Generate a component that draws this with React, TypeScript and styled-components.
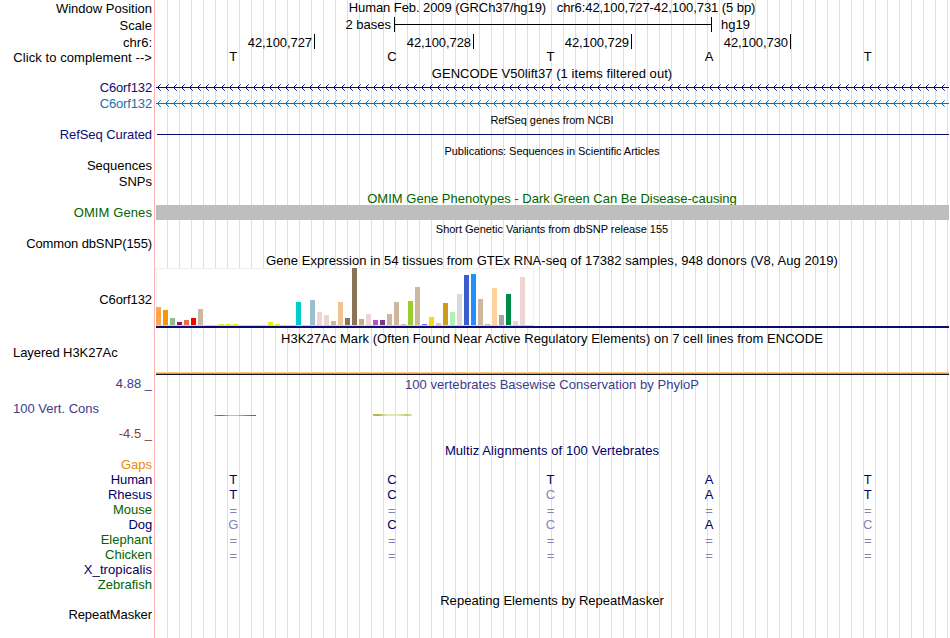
import React from 'react';
import styled, { createGlobalStyle } from 'styled-components';

const GlobalStyle = createGlobalStyle`
    body {
        margin: 0;
        background: #fff;
        overflow: hidden;
    }
`;

const NAVY = '#0c0c78';
const DARK_NAVY = '#000064';
const GREEN = '#006400';

const Browser = styled.div`
    display: flex;
    width: 949px;
    height: 638px;
    background: #fff;
    font-family: "Liberation Sans", Arial, Helvetica, sans-serif;
    font-size: 13px;
    line-height: 15px;
    color: #000;
    white-space: pre;
`;

const LabelColumn = styled.div`
    width: 154px;
    flex: none;
    display: flex;
    flex-direction: column;
`;

const Label = styled.div<{ $gap?: number; $color?: string; $left?: boolean; $spacing?: number }>`
    flex: none;
    height: 15px;
    margin-top: ${({ $gap }) => $gap ?? 0}px;
    padding: 0 2px 0 13px;
    text-align: ${({ $left }) => ($left ? 'left' : 'right')};
    letter-spacing: ${({ $spacing }) => $spacing ?? 0}px;
    color: ${({ $color }) => $color ?? '#000'};
`;

const TrackColumn = styled.div`
    flex: 1;
    min-width: 0;
    display: flex;
    flex-direction: column;
    border-left: 1px solid #ffb4b4;
    background: repeating-linear-gradient(to right, #dcdcf8 0 1px, transparent 1px 12px) 12px 0 no-repeat;
`;

const Title = styled.div<{ $gap?: number; $color?: string; $small?: boolean; $height?: number; $spacing?: number }>`
    flex: none;
    height: ${({ $height }) => $height ?? 15}px;
    margin-top: ${({ $gap }) => $gap ?? 0}px;
    overflow: hidden;
    text-align: center;
    font-size: ${({ $small }) => ($small ? 11 : 13)}px;
    letter-spacing: ${({ $spacing }) => $spacing ?? 0}px;
    color: ${({ $color }) => $color ?? '#000'};
`;

const ScaleRow = styled.div`
    flex: none;
    display: flex;
    height: 15px;
    margin-top: 2px;
`;

const ScaleText = styled.span`
    width: 236px;
    box-sizing: border-box;
    margin-right: 3px;
    text-align: right;
`;

const ScaleBar = styled.div`
    width: 316px;
    height: 15px;
    margin-right: 9px;
    border: solid #000;
    border-width: 0 1px;
    background: linear-gradient(#000, #000) 0 7px / 100% 1px no-repeat;
`;

const PositionRow = styled.div`
    flex: none;
    display: grid;
    grid-template-columns: 159px 159px 158px 159px;
    height: 15px;
    margin-top: 2px;
    padding-left: 1px;
`;

const Position = styled.span`
    padding: 1px 2px 0 0;
    height: 14px;
    border-right: 1px solid #000;
    text-align: right;
    letter-spacing: -0.08px;
`;

const BaseRow = styled.div<{ $gap?: number; $color?: string }>`
    flex: none;
    display: grid;
    grid-template-columns: repeat(5, 158.6px);
    height: 15px;
    margin: ${({ $gap }) => $gap ?? 0}px 0 0 -1px;
    text-align: center;
    color: ${({ $color }) => $color ?? '#000'};
`;

const Base = styled.span<{ $faded?: boolean; $unaligned?: boolean }>`
    padding-top: ${({ $unaligned }) => ($unaligned ? 1 : 0)}px;
    color: ${({ $faded }) => ($faded ? '#8484b4' : 'inherit')};
`;

const Gene = styled.svg<{ $gap: number }>`
    flex: none;
    display: block;
    width: 794px;
    height: 7px;
    margin-top: ${({ $gap }) => $gap}px;
`;

const Band = styled.div<{ $gap: number; $height: number; $color: string; $inset?: number }>`
    flex: none;
    height: ${({ $height }) => $height}px;
    margin: ${({ $gap, $inset }) => `${$gap}px 0 0 ${$inset ?? 1}px`};
    background: ${({ $color }) => $color};
`;

const Expression = styled.div`
    flex: none;
    display: flex;
    align-items: flex-end;
    gap: 2px;
    box-sizing: border-box;
    width: 378px;
    height: 58px;
    margin: -2px 0 0 1px;
    background:
        linear-gradient(#d3d3d3, #d3d3d3) 0 100% / 100% 1px no-repeat,
        linear-gradient(#f0f0f0, #f0f0f0) 0 0 / 100% 1px no-repeat,
        linear-gradient(#f0f0f0, #f0f0f0) 0 0 / 1px 100% no-repeat,
        linear-gradient(#f0f0f0, #f0f0f0) 100% 0 / 1px 100% no-repeat,
        #fff;
    padding-bottom: 1px;
`;

const Tissue = styled.i<{ $color: string; $height: number }>`
    flex: none;
    width: 5px;
    height: ${({ $height }) => $height}px;
    background: ${({ $color }) => $color};
`;

const Conservation = styled.div`
    flex: none;
    display: flex;
    height: 2px;
    margin-top: 22px;
`;

const BlueScore = styled.div`
    width: 42px;
    height: 1px;
    margin: 1px 117px 0 59px;
    background: linear-gradient(to right, #9c9cff, #5050ff 15%, #b4b4ff 40%, #b4b4ff 55%, #6464ff 80%, #5050ff);
`;

const OliveScore = styled.div`
    width: 39px;
    height: 2px;
    background: linear-gradient(to right, #c0c040, #b4b43c 15%, #e6e6b4 35%, #e6e6b4 65%, #c8c864 88%, #e6e6b4);
`;

// [colour, height] for every GTEx tissue, in track order
const tissues: [string, number][] = [
    ['#ffa54f', 18], ['#ee9a00', 15], ['#8fbc8f', 7], ['#8b1c62', 3], ['#ee6a50', 5], ['#ff0000', 7], ['#cdb79e', 16],
    ['#eeee00', 0], ['#eeee00', 0], ['#eeee00', 1], ['#eeee00', 1], ['#eeee00', 1], ['#eeee00', 0], ['#eeee00', 0],
    ['#eeee00', 0], ['#eeee00', 0], ['#eeee00', 3], ['#eeee00', 1], ['#eeee00', 0], ['#eeee00', 0],
    ['#00cdcd', 23], ['#ee82ee', 0], ['#9ac0cd', 25], ['#eed5d2', 13], ['#eed5d2', 10], ['#cdb79e', 4], ['#eec591', 23],
    ['#8b7355', 7], ['#8b7355', 57], ['#cdaa7d', 6], ['#eed5d2', 11], ['#b452cd', 5], ['#7a378b', 5], ['#cdb79e', 11],
    ['#cdb79e', 23], ['#cdb79e', 1], ['#9acd32', 24], ['#cdb79e', 38], ['#7a67ee', 1], ['#ffd700', 8], ['#ffb6c1', 2],
    ['#cd9b1d', 22], ['#b4eeb4', 13], ['#d9d9d9', 31], ['#3a5fcd', 50], ['#1e90ff', 51], ['#cdb79e', 26], ['#cdb79e', 1],
    ['#ffd39b', 37], ['#a6a6a6', 10], ['#008b45', 31], ['#eed5d2', 4], ['#eed5d2', 48], ['#ff00ff', 0],
];

// lower case marks a base that differs from the human one
const alignments = ['TCTAT', 'TCcAT', '=====', 'gCcAc', '=====', '====='];

type GeneArrowsPropsType = {
    id: string,
    color: string,
    gap: number
}

function GeneArrows({ id, color, gap }: GeneArrowsPropsType) {
    return (
        <Gene $gap={gap} viewBox="0 0 794 7" shapeRendering="crispEdges">
            <defs>
                <pattern id={id} x="2" y="0" width="8" height="7" patternUnits="userSpaceOnUse">
                    <path d="M0 3h1v1h-1zM1 2h1v3h-1zM2 1h1v1h-1zM2 5h1v1h-1z" fill={color} />
                    <path d="M3 0h1v1h-1zM3 6h1v1h-1z" fill={color} fillOpacity="0.7" />
                </pattern>
            </defs>
            <rect x="2" width="792" height="7" fill={`url(#${id})`} />
            <rect x="1" y="3" width="793" height="1" fill={color} />
        </Gene>
    );
}

function Labels() {
    return (
        <LabelColumn>
            <Label $gap={1}>Window Position</Label>
            <Label $gap={2}>Scale</Label>
            <Label $gap={2}>chr6:</Label>
            <Label $spacing={0.08}>{'Click to complement -->'}</Label>
            <Label $gap={15} $color={NAVY} $spacing={-0.15}>C6orf132</Label>
            <Label $gap={1} $color="#1670b0" $spacing={-0.15}>C6orf132</Label>
            <Label $gap={16} $color={NAVY} $spacing={-0.07}>RefSeq Curated</Label>
            <Label $gap={16}>Sequences</Label>
            <Label $gap={1}>SNPs</Label>
            <Label $gap={16} $color={GREEN} $spacing={0.1}>OMIM Genes</Label>
            <Label $gap={16} $spacing={-0.12}>Common dbSNP(155)</Label>
            <Label $gap={41} $spacing={-0.1}>C6orf132</Label>
            <Label $gap={38} $left $spacing={-0.06}>Layered H3K27Ac</Label>
            <Label $gap={16} $color="#3c3c8c">4.88 _</Label>
            <Label $gap={10} $color="#3c3c8c" $left>100 Vert. Cons</Label>
            <Label $gap={10} $color="#8c3c3c">-4.5 _</Label>
            <Label $gap={16} $color="#e68a00">Gaps</Label>
            <Label $color={DARK_NAVY} $spacing={-0.15}>Human</Label>
            <Label $color={DARK_NAVY}>Rhesus</Label>
            <Label $color={GREEN}>Mouse</Label>
            <Label $color={DARK_NAVY} $spacing={-0.15}>Dog</Label>
            <Label $color={GREEN}>Elephant</Label>
            <Label $color={GREEN}>Chicken</Label>
            <Label $color={DARK_NAVY} $spacing={0.08}>X_tropicalis</Label>
            <Label $color={GREEN}>Zebrafish</Label>
            <Label $gap={15} $spacing={-0.08}>RepeatMasker</Label>
        </LabelColumn>
    );
}

function Tracks() {
    return (
        <TrackColumn>
            <Title $spacing={-0.07}>{'Human Feb. 2009 (GRCh37/hg19)   chr6:42,100,727-42,100,731 (5 bp)'}</Title>
            <ScaleRow>
                <ScaleText>2 bases</ScaleText>
                <ScaleBar />
                <span>hg19</span>
            </ScaleRow>
            <PositionRow>
                {['42,100,727', '42,100,728', '42,100,729', '42,100,730'].map((pos) => <Position key={pos}>{pos}</Position>)}
            </PositionRow>
            <BaseRow>
                {[...'TCTAT'].map((base, i) => <Base key={i}>{base}</Base>)}
            </BaseRow>
            <Title $gap={2} $spacing={0.05}>GENCODE V50lift37 (1 items filtered out)</Title>
            <GeneArrows id="arrowNavy" color={NAVY} gap={3} />
            <GeneArrows id="arrowBlue" color="#1670b0" gap={9} />
            <Title $gap={6} $small $spacing={-0.04}>RefSeq genes from NCBI</Title>
            <Band $gap={6} $height={1} $color={NAVY} $inset={2} />
            <Title $gap={9} $small $spacing={-0.06}>Publications: Sequences in Scientific Articles</Title>
            <Title $gap={32} $height={14} $color={GREEN} $spacing={0.02}>OMIM Gene Phenotypes - Dark Green Can Be Disease-causing</Title>
            <Band $gap={0} $height={15} $color="#bebebe" />
            <Title $gap={2} $small $spacing={-0.02}>Short Genetic Variants from dbSNP release 155</Title>
            <Title $gap={16} $height={17} $spacing={0.05}>Gene Expression in 54 tissues from GTEx RNA-seq of 17382 samples, 948 donors (V8, Aug 2019)</Title>
            <Expression>
                {tissues.map(([color, height], i) => <Tissue key={i} $color={color} $height={height} />)}
            </Expression>
            <Band $gap={0} $height={2} $color={NAVY} />
            <Title $gap={3} $spacing={0.05}>H3K27Ac Mark (Often Found Near Active Regulatory Elements) on 7 cell lines from ENCODE</Title>
            <Band $gap={26} $height={1} $color="#ffc878" />
            <Band $gap={0} $height={1} $color="#e68282" />
            <Band $gap={0} $height={1} $color="#10102c" />
            <Title $gap={2} $color="#3c3c8c" $spacing={0.04}>100 vertebrates Basewise Conservation by PhyloP</Title>
            <Conservation>
                <BlueScore />
                <OliveScore />
            </Conservation>
            <Title $gap={27} $color={DARK_NAVY} $spacing={0.09}>Multiz Alignments of 100 Vertebrates</Title>
            {alignments.map((row, i) => (
                <BaseRow key={i} $gap={i === 0 ? 14 : 0} $color={DARK_NAVY}>
                    {[...row].map((base, j) => (
                        <Base key={j} $faded={base !== base.toUpperCase() || base === '='} $unaligned={base === '='}>
                            {base.toUpperCase()}
                        </Base>
                    ))}
                </BaseRow>
            ))}
            <Title $gap={31} $spacing={0.03}>Repeating Elements by RepeatMasker</Title>
        </TrackColumn>
    );
}

function App() {
    return (
        <>
            <GlobalStyle />
            <Browser>
                <Labels />
                <Tracks />
            </Browser>
        </>
    );
}

export default App;
